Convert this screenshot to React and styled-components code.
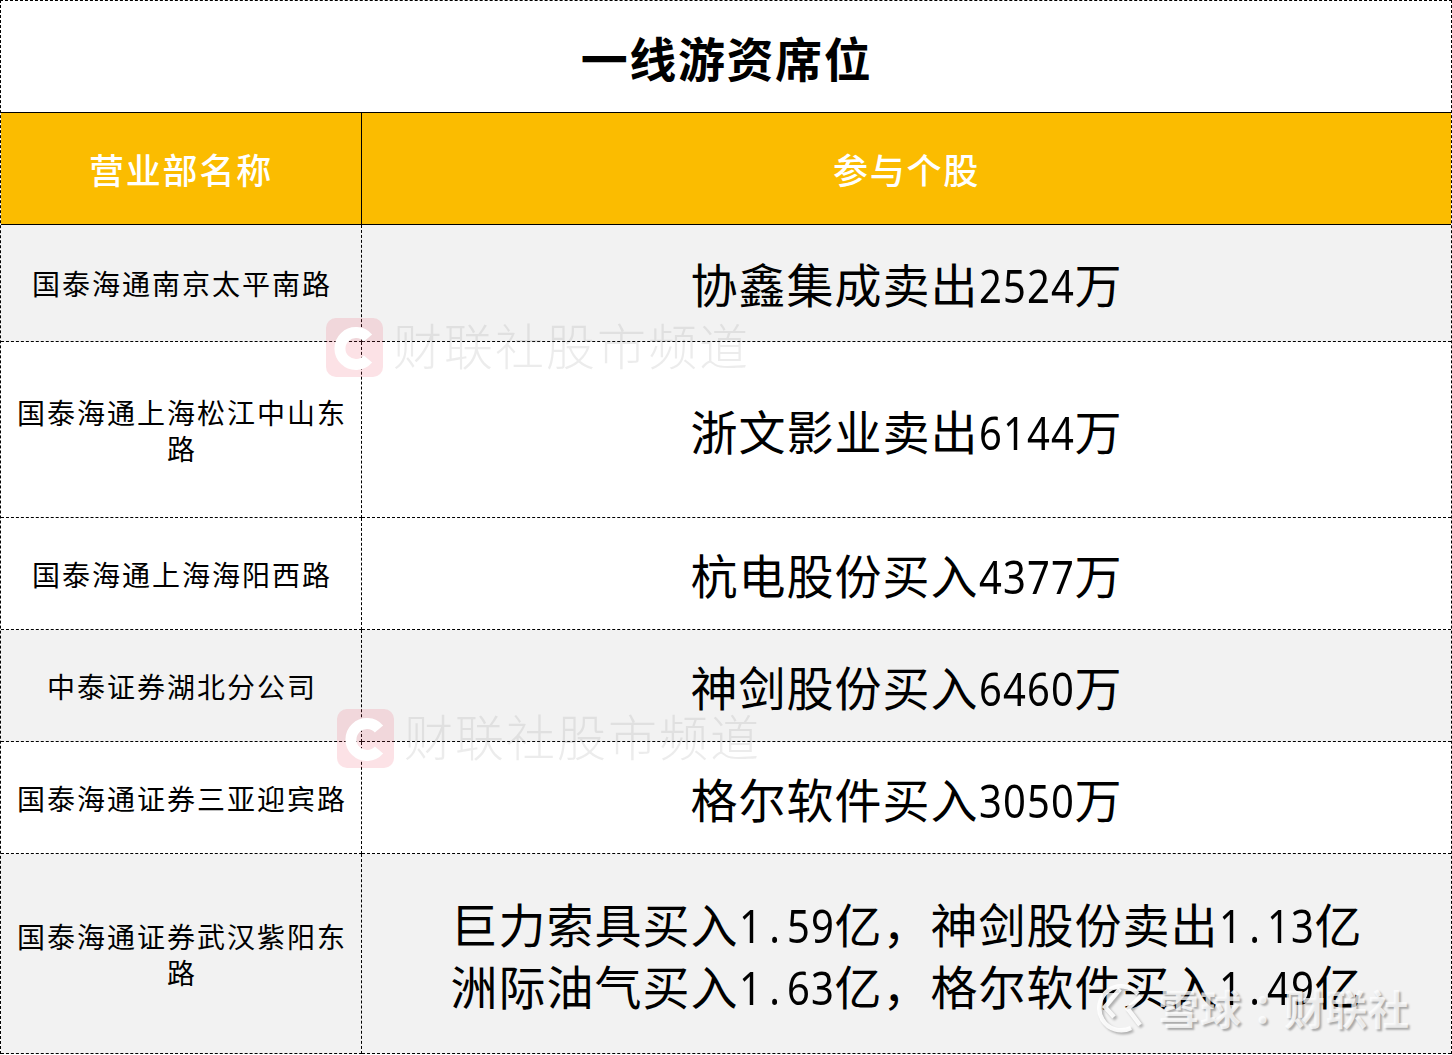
import React from "react";
import styled, { createGlobalStyle } from "styled-components";

const CJK = `"Noto Sans CJK SC", "Noto Sans", sans-serif`;

const Global = createGlobalStyle`
  html, body { margin: 0; padding: 0; background: #fff; }
  body { font-family: ${CJK}; color: #000; }
`;

const Sheet = styled.div`
  position: relative;
  width: 1452px;
  height: 1055px;
  overflow: hidden;
  background: #fff;
`;

const Table = styled.div`
  display: grid;
  grid-template-columns: 361px 1fr;
  grid-template-rows: 112px 112px 117px 176px 112px 112px 112px 200px;
  width: 1452px;
  height: 1054px;
  box-sizing: border-box;
  border: 1px dashed #000;
`;

const Cell = styled.div`
  display: flex;
  align-items: center;
  justify-content: center;
  box-sizing: border-box;
  text-align: center;
  background: ${(p) => (p.$shade ? "#f2f2f2" : "#fff")};
  border-bottom: 1px dashed #000;
`;

const TitleCell = styled(Cell)`
  grid-column: 1 / 3;
  border-bottom: 1px solid #000;
  font-size: 47px;
  font-weight: 700;
  letter-spacing: 1.6px;
  padding-left: 1px;
`;

const HeadCell = styled(Cell)`
  background: #fbbc00;
  color: #fff;
  font-size: 35px;
  font-weight: 500;
  letter-spacing: 1.8px;
  border-bottom: 1px solid #000;
  border-right: ${(p) => (p.$first ? "1px solid #000" : "0")};
`;

const NameCell = styled(Cell)`
  border-right: 1px dashed #000;
  padding: 0 13px 0 15px;
  font-size: 28px;
  line-height: 36px;
  letter-spacing: 2px;
`;

const DealCell = styled(Cell)`
  font-size: 47px;
  line-height: 62px;
  letter-spacing: 1px;
`;

const DealLine = styled.div`
  height: 62px;
`;

const Digit = styled.span`
  display: inline-block;
  width: 24px;
  text-align: center;
  font-family: "Noto Sans", sans-serif;
  font-size: 40px;
  line-height: 40px;
  letter-spacing: 0;
  transform: scaleY(1.14);
  transform-origin: 50% 80%;
`;

const Mark = styled.div`
  position: absolute;
  left: ${(p) => p.$x}px;
  top: ${(p) => p.$y}px;
  display: flex;
  align-items: flex-start;
  gap: 10px;
  pointer-events: none;
`;

const MarkLogo = styled.div`
  width: 57px;
  height: 59px;
  border-radius: 10px;
  background: rgba(235, 60, 90, 0.15);
  display: flex;
  align-items: center;
  justify-content: center;
`;

const MarkText = styled.span`
  font-size: 49px;
  line-height: 51px;
  letter-spacing: 2px;
  font-weight: 300;
  color: rgba(120, 120, 120, 0.14);
`;

const Snow = styled.div`
  position: absolute;
  left: 1094px;
  top: 983px;
  display: flex;
  align-items: flex-start;
  gap: 10px;
  pointer-events: none;
`;

const SnowIcon = styled.svg`
  display: block;
  overflow: visible;
  filter: drop-shadow(2px 2px 1px rgba(0, 0, 0, 0.3));
`;

const SnowText = styled.span`
  font-family: "Noto Sans CJK TC", ${CJK};
  font-size: 41px;
  line-height: 48px;
  font-weight: 700;
  letter-spacing: 1px;
  color: rgba(255, 255, 255, 0.75);
  text-shadow: 2px 2px 2px rgba(0, 0, 0, 0.3);
`;

const Deal = ({ parts }) => (
  <>
    {parts.map((p, i) =>
      /^[\d.]+$/.test(p) ? (
        [...p].map((c, j) => <Digit key={`${i}-${j}`}>{c}</Digit>)
      ) : (
        <React.Fragment key={i}>{p}</React.Fragment>
      )
    )}
  </>
);

const rows = [
  { name: "国泰海通南京太平南路", shade: true, deals: [["协鑫集成卖出", "2524", "万"]] },
  { name: "国泰海通上海松江中山东路", deals: [["浙文影业卖出", "6144", "万"]] },
  { name: "国泰海通上海海阳西路", deals: [["杭电股份买入", "4377", "万"]] },
  { name: "中泰证券湖北分公司", shade: true, deals: [["神剑股份买入", "6460", "万"]] },
  { name: "国泰海通证券三亚迎宾路", deals: [["格尔软件买入", "3050", "万"]] },
  {
    name: "国泰海通证券武汉紫阳东路",
    shade: true,
    deals: [
      ["巨力索具买入", "1.59", "亿，神剑股份卖出", "1.13", "亿"],
      ["洲际油气买入", "1.63", "亿，格尔软件买入", "1.49", "亿"],
    ],
  },
];

const CLogo = () => (
  <svg width="44" height="46" viewBox="0 0 44 46" fill="none">
    <path d="M35 13 A16 16 0 1 0 35 34" stroke="#fff" strokeWidth="11" />
  </svg>
);

const SnowLogo = () => (
  <SnowIcon width="54" height="50" viewBox="0 0 54 50" fill="none" stroke="#fff" strokeOpacity="0.9" strokeWidth="4.5">
    <path d="M37 45 A22 22 0 1 1 44 11" />
    <path d="M26 6 L11 24 L20 34" />
    <path d="M47 13 L34 26 L46 42" />
  </SnowIcon>
);

export default function App() {
  return (
    <Sheet>
      <Global />
      <Table>
        <TitleCell>一线游资席位</TitleCell>
        <HeadCell $first>营业部名称</HeadCell>
        <HeadCell>参与个股</HeadCell>
        {rows.map((r) => (
          <React.Fragment key={r.name}>
            <NameCell $shade={r.shade}>{r.name}</NameCell>
            <DealCell $shade={r.shade}>
              <div>
                {r.deals.map((d, i) => (
                  <DealLine key={i}>
                    <Deal parts={d} />
                  </DealLine>
                ))}
              </div>
            </DealCell>
          </React.Fragment>
        ))}
      </Table>
      <Mark $x={326} $y={318}>
        <MarkLogo><CLogo /></MarkLogo>
        <MarkText>财联社股市频道</MarkText>
      </Mark>
      <Mark $x={337} $y={709}>
        <MarkLogo><CLogo /></MarkLogo>
        <MarkText>财联社股市频道</MarkText>
      </Mark>
      <Snow>
        <SnowLogo />
        <SnowText>雪球：财联社</SnowText>
      </Snow>
    </Sheet>
  );
}
